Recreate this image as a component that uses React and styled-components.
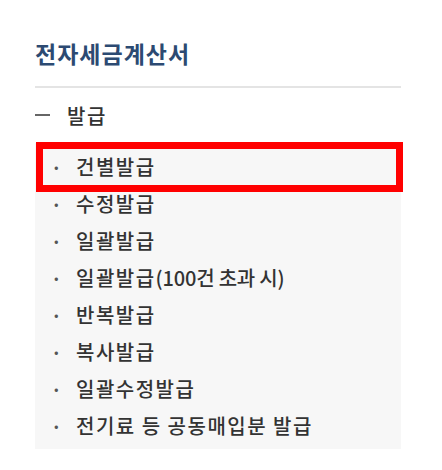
import React from 'react';
import styled, { createGlobalStyle } from 'styled-components';

const GlobalStyle = createGlobalStyle`
  body {
    margin: 0;
    background: #ffffff;
    font-family: "Noto Sans CJK KR", "Noto Sans", sans-serif;
  }
`;

const Wrapper = styled.div`
  width: 442px;
  height: 470px;
  padding: 35px 0 0 35px;
  box-sizing: border-box;
`;

const Nav = styled.nav`
  width: 366px;
`;

const Title = styled.h2`
  margin: 0;
  color: #2c4a72;
  font-size: 23px;
  font-weight: 700;
  line-height: 36px;
  letter-spacing: 1px;
`;

const Line = styled.hr`
  border: 0;
  border-top: 2px solid #e4e4e4;
  margin: 15px 0 0;
`;

const Group = styled.div`
  display: flex;
  align-items: center;
  gap: 17px;
  height: 30px;
  margin: 12px 0 13px;
  color: #333;
  font-size: 20px;
  font-weight: 500;
  letter-spacing: 1.5px;
`;

const Dash = styled.span`
  display: block;
  width: 15px;
  height: 2px;
  background: #666;
`;

const List = styled.ul`
  list-style: none;
  margin: 0;
  padding: 5px 0 5px;
  background: #f7f7f7;
`;

const Item = styled.li`
  position: relative;
  display: flex;
  align-items: center;
  height: 37px;
  padding-left: 16px;
  color: #333;
  font-size: 20px;
  font-weight: 500;
  letter-spacing: 1.5px;
  white-space: pre;

  &::before {
    content: "·";
    width: 25px;
    color: #555;
    font-size: 18px;
    font-weight: 700;
  }

  ${({ $selected }) => $selected && `
    &::after {
      content: "";
      position: absolute;
      top: -6px;
      bottom: -7px;
      left: 1px;
      right: -2px;
      border: 7px solid #ff0000;
    }
  `}
`;

const Note = styled.span`
  letter-spacing: -0.2px;
`;

const items = [
  { label: '건별발급' },
  { label: '수정발급' },
  { label: '일괄발급' },
  { label: '일괄발급', note: '(100건 초과 시)' },
  { label: '반복발급' },
  { label: '복사발급' },
  { label: '일괄수정발급' },
  { label: '전기료 등 공동매입분 발급' },
];

const App = () => {
  return (
    <Wrapper>
      <GlobalStyle />
      <Nav>
        <Title>전자세금계산서</Title>
        <Line />
        <Group>
          <Dash />
          발급
        </Group>
        <List>
          {items.map((item, i) => (
            <Item key={item.label + i} $selected={i === 0}>
              {item.label}
              {item.note && <Note>{item.note}</Note>}
            </Item>
          ))}
        </List>
      </Nav>
    </Wrapper>
  );
};

export default App;
